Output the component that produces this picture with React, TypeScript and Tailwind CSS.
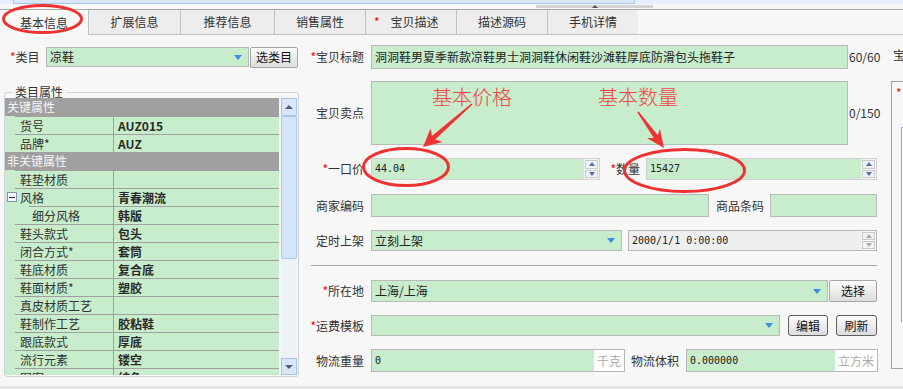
import React from "react";

const CJK = "font-['Noto_Sans_CJK_SC','Noto_Sans',sans-serif]";
const MONO = "font-['DejaVu_Sans_Mono',monospace]";

function Star() {
  return <span className="text-[#ff0000]">*</span>;
}

function DropArrow() {
  return <span className="block w-0 h-0 border-x-[4px] border-x-transparent border-t-[5px] border-t-[#3a8de3]" />;
}

function Spinner({ off = false }: { off?: boolean }) {
  const up = off ? "border-b-[#a9a9a9]" : "border-b-[#4f6fb5]";
  const down = off ? "border-t-[#a9a9a9]" : "border-t-[#4f6fb5]";
  return (
    <div className="w-[15px] h-full shrink-0 flex flex-col gap-[1px] p-[1px] bg-[#f6f6f6]">
      <div className="flex-1 flex items-center justify-center border border-[#c9c9c9] bg-[#f1f3f7]">
        <span className={`block w-0 h-0 border-x-[3px] border-x-transparent border-b-[4px] ${up}`} />
      </div>
      <div className="flex-1 flex items-center justify-center border border-[#c9c9c9] bg-[#f1f3f7]">
        <span className={`block w-0 h-0 border-x-[3px] border-x-transparent border-t-[4px] ${down}`} />
      </div>
    </div>
  );
}

function Field({ className = "", children }: { className?: string; children?: React.ReactNode }) {
  return <div className={`flex items-center shrink-0 border border-[#b9b9b9] bg-[#c7edcc] text-[#222] ${className}`}>{children}</div>;
}

function Btn({ className = "", dark = false, children }: { className?: string; dark?: boolean; children: React.ReactNode }) {
  return (
    <div
      className={`flex items-center justify-center shrink-0 bg-linear-to-b from-[#fdfdfd] to-[#dcdcdc] text-[#111] ${
        dark ? "border border-[#5f5f5f] rounded-[3px]" : "border border-[#a6a6a6] rounded-[2px]"
      } ${className}`}
    >
      {children}
    </div>
  );
}

function Label({ className = "w-[64px]", children }: { className?: string; children: React.ReactNode }) {
  return <div className={`shrink-0 text-right whitespace-nowrap text-[#333] ${className}`}>{children}</div>;
}

const tabs = [
  { label: "基本信息", w: "w-[88px]", active: true },
  { label: "扩展信息", w: "w-[92px]" },
  { label: "推荐信息", w: "w-[94px]" },
  { label: "销售属性", w: "w-[91px]" },
  { label: "宝贝描述", w: "w-[91px]", star: true },
  { label: "描述源码", w: "w-[91px]" },
  { label: "手机详情", w: "w-[91px]" },
];

type Row = { head?: string; name?: string; value?: string; toggle?: boolean; sub?: boolean };

const rows: Row[] = [
  { head: "关键属性" },
  { name: "货号", value: "AUZ015" },
  { name: "品牌*", value: "AUZ" },
  { head: "非关键属性" },
  { name: "鞋垫材质", value: "" },
  { name: "风格", value: "青春潮流", toggle: true },
  { name: "细分风格", value: "韩版", sub: true },
  { name: "鞋头款式", value: "包头" },
  { name: "闭合方式*", value: "套筒" },
  { name: "鞋底材质", value: "复合底" },
  { name: "鞋面材质*", value: "塑胶" },
  { name: "真皮材质工艺", value: "" },
  { name: "鞋制作工艺", value: "胶粘鞋" },
  { name: "跟底款式", value: "厚底" },
  { name: "流行元素", value: "镂空" },
  { name: "图案", value: "纯色" },
];

function arrow(x1: number, y1: number, x2: number, y2: number, hl: number, hw: number, w0: number, w1: number) {
  const L = Math.hypot(x2 - x1, y2 - y1);
  const ux = (x2 - x1) / L;
  const uy = (y2 - y1) / L;
  const px = -uy;
  const py = ux;
  const bx = x2 - ux * hl;
  const by = y2 - uy * hl;
  const nx = bx + ux * 4;
  const ny = by + uy * 4;
  const p = (x: number, y: number) => `${x.toFixed(1)},${y.toFixed(1)}`;
  return [
    p(x1 + (px * w0) / 2, y1 + (py * w0) / 2),
    p(nx + (px * w1) / 2, ny + (py * w1) / 2),
    p(bx + px * hw, by + py * hw),
    p(x2, y2),
    p(bx - px * hw, by - py * hw),
    p(nx - (px * w1) / 2, ny - (py * w1) / 2),
    p(x1 - (px * w0) / 2, y1 - (py * w0) / 2),
  ].join(" ");
}

function AttrRow({ r }: { r: Row }) {
  if (r.head) {
    return <div className="h-[18px] bg-[#a0a0a0] pl-[2px] leading-[18px] text-[#f5f5f5]">{r.head}</div>;
  }
  return (
    <div className="h-[18px] flex bg-[#c7edcc]">
      <div className={`${r.sub ? "w-[24px]" : "w-[10px]"} shrink-0 flex items-center`}>
        {r.toggle && (
          <span className="ml-[2px] w-[10px] h-[10px] shrink-0 border border-[#7f93b3] bg-[#f4f7fb] flex items-center justify-center">
            <span className="block w-[6px] h-[1px] bg-[#333]" />
          </span>
        )}
      </div>
      <div
        className={`${r.sub ? "w-[85px] pl-[3px]" : "w-[99px] pl-[5px]"} shrink-0 border-t border-r border-[#a0a0a0] leading-[17px] whitespace-nowrap`}
      >
        {r.name}
      </div>
      <div className="flex-1 border-t border-[#a0a0a0] pl-[4px] leading-[17px] font-bold text-[#2a2a2a]">{r.value}</div>
    </div>
  );
}

export default function App() {
  return (
    <div className={`relative w-[903px] h-[389px] overflow-hidden bg-[#f7f7f7] text-[12px] leading-[16px] text-[#333] ${CJK}`}>
      {/* top splitter */}
      <div className="h-[4px] flex bg-[#e5effd]">
        <div className="ml-[13px] w-[622px] h-[4px] bg-[#d9e7fb] border-x border-b border-[#a9c7ef]" />
      </div>
      <div className="h-[5px] flex items-start">
        <div className="ml-[536px] mt-[1px] w-[117px] h-[3px] bg-[#d5d5d5] flex justify-center">
          <span className="block w-0 h-0 border-x-[3px] border-x-transparent border-b-[3px] border-b-[#555]" />
        </div>
      </div>
      <div className="h-[1px] bg-[#a9a9a9]" />

      {/* tabs */}
      <div className="h-[25px] flex">
        {tabs.map((t) => (
          <div
            key={t.label}
            className={`${t.w} h-full flex items-center ${t.star ? "pl-[8px]" : "justify-center"} ${
              t.active ? "" : "bg-[#ededed] border-l border-b border-[#c3c3c3]"
            }`}
          >
            {t.star && <span className="mr-[11px] text-[#ff0000]">*</span>}
            {t.label}
          </div>
        ))}
        <div className="flex-1 border-b border-[#c3c3c3]" />
      </div>

      {/* body */}
      <div className="h-[351px] flex">
        {/* left: category */}
        <div className="w-[300px] shrink-0 pt-[12px]">
          <div className="flex items-center h-[20px]">
            <div className="w-[46px] shrink-0 pl-[10px] whitespace-nowrap">
              <Star />类目
            </div>
            <Field className="w-[203px] h-[20px] pl-[3px] pr-[6px] justify-between">
              <span>凉鞋</span>
              <DropArrow />
            </Field>
            <Btn className="ml-[1px] w-[48px] h-[21px]">选类目</Btn>
          </div>

          <fieldset className="mt-[17px] ml-[4px] w-[295px] h-[293px] border border-[#cfd3d9] rounded-[3px]">
            <legend className="ml-[7px] px-[3px] leading-[16px]">类目属性</legend>
            <div className="-mt-[2px] h-[277px] flex overflow-hidden">
              <div className="w-[274px] shrink-0">
                {rows.map((r, i) => (
                  <AttrRow key={i} r={r} />
                ))}
              </div>
              <div className="ml-[2px] w-[16px] h-full flex flex-col">
                <div className="h-[18px] flex items-center justify-center bg-[#d8e7fb] border border-[#a7c3ea]">
                  <span className="block w-0 h-0 border-x-[4px] border-x-transparent border-b-[4px] border-b-[#4d5d7c]" />
                </div>
                <div className="h-[143px] bg-[#d3e4fb] border border-[#a9c6ee] rounded-[2px]" />
                <div className="flex-1 bg-[#eef1f6]" />
                <div className="h-[17px] flex items-center justify-center bg-[#d8e7fb] border border-[#a7c3ea]">
                  <span className="block w-0 h-0 border-x-[4px] border-x-transparent border-t-[4px] border-t-[#4d5d7c]" />
                </div>
              </div>
            </div>
          </fieldset>
        </div>

        {/* middle: form */}
        <div className="w-[577px] shrink-0 pt-[10px]">
          <div className="flex items-center h-[24px]">
            <Label>
              <Star />宝贝标题
            </Label>
            <Field className="ml-[7px] w-[477px] h-[24px] pl-[3px] whitespace-nowrap overflow-hidden">
              洞洞鞋男夏季新款凉鞋男士洞洞鞋休闲鞋沙滩鞋厚底防滑包头拖鞋子
            </Field>
            <span className="ml-[1px]">60/60</span>
          </div>

          <div className="flex items-center h-[64px] mt-[12px]">
            <Label>宝贝卖点</Label>
            <Field className="ml-[7px] w-[477px] h-[64px]" />
            <span className="ml-[1px]">0/150</span>
          </div>

          <div className="flex items-center h-[22px] mt-[13px]">
            <Label>
              <Star />一口价
            </Label>
            <Field className="ml-[7px] w-[229px] h-[22px] items-stretch border-[#d0d0d0]">
              <span className={`flex-1 pl-[3px] self-center text-[10px] ${MONO}`}>44.04</span>
              <Spinner />
            </Field>
            <Label className="w-[40px]">
              <Star />数量
            </Label>
            <Field className="ml-[6px] w-[231px] h-[22px] items-stretch border-[#d0d0d0]">
              <span className={`flex-1 pl-[3px] self-center text-[10px] ${MONO}`}>15427</span>
              <Spinner />
            </Field>
          </div>

          <div className="flex items-center h-[23px] mt-[14px]">
            <Label>商家编码</Label>
            <Field className="ml-[7px] w-[338px] h-[23px]" />
            <Label className="ml-[7px] w-[48px]">商品条码</Label>
            <Field className="ml-[6px] w-[107px] h-[23px]" />
          </div>

          <div className="flex items-center h-[21px] mt-[13px]">
            <Label>定时上架</Label>
            <Field className="ml-[7px] w-[251px] h-[21px] pl-[3px] pr-[6px] justify-between">
              <span>立刻上架</span>
              <DropArrow />
            </Field>
            <div className="ml-[6px] w-[249px] h-[21px] flex border border-[#b9b9b9] bg-[#efefef]">
              <span className={`flex-1 pl-[3px] self-center text-[10px] text-[#222] ${MONO}`}>2000/1/1 0:00:00</span>
              <Spinner off />
            </div>
          </div>

          <div className="mt-[14px] ml-[11px] w-[566px] h-[1px] bg-[#a9a9a9]" />

          <div className="flex items-center h-[22px] mt-[14px]">
            <Label>
              <Star />所在地
            </Label>
            <Field className="ml-[7px] w-[457px] h-[22px] pl-[3px] pr-[6px] justify-between">
              <span>上海/上海</span>
              <DropArrow />
            </Field>
            <Btn className="ml-[1px] w-[48px] h-[22px]">选择</Btn>
          </div>

          <div className="flex items-center h-[21px] mt-[13px]">
            <Label>
              <Star />运费模板
            </Label>
            <Field className="ml-[7px] w-[409px] h-[21px] pr-[6px] justify-end">
              <DropArrow />
            </Field>
            <Btn dark className="ml-[8px] w-[40px] h-[21px]">编辑</Btn>
            <Btn dark className="ml-[8px] w-[41px] h-[21px]">刷新</Btn>
          </div>

          <div className="flex items-center h-[23px] mt-[13px]">
            <Label>物流重量</Label>
            <Field className="ml-[7px] w-[254px] h-[23px] items-stretch">
              <span className={`flex-1 pl-[3px] self-center text-[10px] ${MONO}`}>0</span>
              <span className="w-[30px] bg-white flex items-center justify-end pr-[3px] text-[#aaaaaa]">千克</span>
            </Field>
            <Label className="ml-[6px] w-[48px]">物流体积</Label>
            <Field className="ml-[7px] w-[192px] h-[23px] items-stretch">
              <span className={`flex-1 pl-[3px] self-center text-[10px] ${MONO}`}>0.000000</span>
              <span className="w-[42px] bg-white flex items-center justify-center text-[#aaaaaa]">立方米</span>
            </Field>
          </div>
        </div>

        {/* right: picture panel (cut off) */}
        <div className="flex-1 overflow-hidden">
          <div className="mt-[14px] ml-[16px] whitespace-nowrap leading-[12px]">宝贝图片</div>
          <div className="mt-[20px] ml-[14px] h-[288px] border-l border-y border-[#a3a3a3] pl-[4px] pt-[6px] flex flex-col">
            <span className="text-[#ff0000] leading-[10px]">*</span>
            <div className="ml-[5px] mt-[29px] w-[10px] h-[195px] border-l border-t border-[#94a7cc]" />
            <div className="ml-[8px] mt-[10px] w-[4px] h-[2px] bg-[#666]" />
          </div>
        </div>
      </div>

      <div className="h-[3px] bg-[#e4e4e4]" />

      {/* red annotations drawn over the screenshot */}
      <svg className="absolute left-0 top-0 pointer-events-none" width="903" height="389">
        <ellipse cx="42.5" cy="19" rx="39" ry="13.5" fill="none" stroke="#ee3131" strokeWidth="3" />
        <ellipse cx="406" cy="167" rx="42.5" ry="18.5" fill="none" stroke="#ee3131" strokeWidth="3" />
        <ellipse cx="684.5" cy="170.5" rx="60" ry="21" fill="none" stroke="#ee3131" strokeWidth="3" />
        <polygon points={arrow(472, 104, 423, 147, 18, 9, 1.5, 5)} fill="#ef3333" />
        <polygon points={arrow(638, 112, 664, 148, 18, 8, 1.5, 5)} fill="#ef3333" />
      </svg>
      <div className="absolute left-[432px] top-[86px] text-[20px] leading-[22px] font-light text-[#f24545]">基本价格</div>
      <div className="absolute left-[598px] top-[86px] text-[20px] leading-[22px] font-light text-[#f24545]">基本数量</div>
    </div>
  );
}
